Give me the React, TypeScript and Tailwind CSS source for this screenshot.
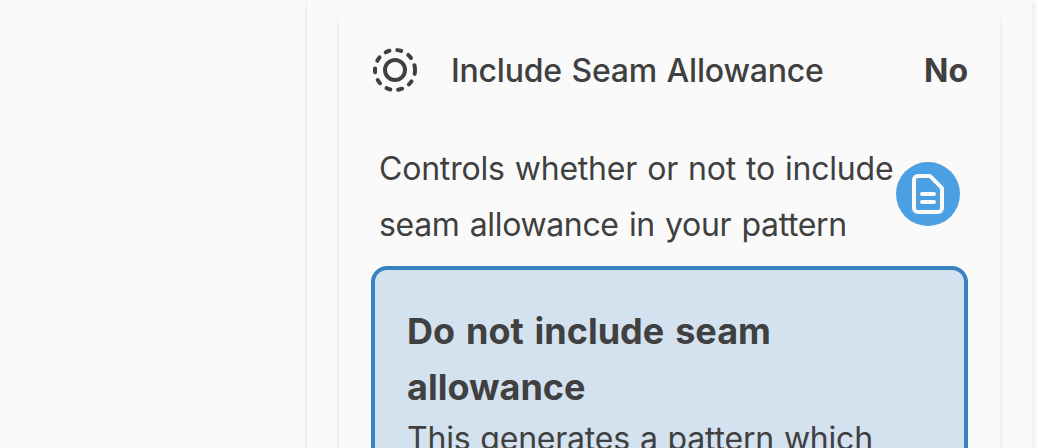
function SeamAllowanceIcon() {
  return (
    <svg viewBox="0 0 24 24" className="size-12 shrink-0" fill="none" stroke="currentColor" strokeWidth="2" strokeLinecap="round">
      <circle cx="12" cy="12" r="5" />
      <circle cx="12" cy="12" r="10" strokeDasharray="2 4" />
    </svg>
  );
}

function DocsIcon() {
  return (
    <svg viewBox="0 0 24 24" className="size-12" fill="none" stroke="currentColor" strokeWidth="2" strokeLinecap="round" strokeLinejoin="round">
      <path d="M9 12h6m-6 4h6m2 5H7a2 2 0 01-2-2V5a2 2 0 012-2h5.586a1 1 0 01.707.293l5.414 5.414a1 1 0 01.293.707V19a2 2 0 01-2 2z" />
    </svg>
  );
}

export default function App() {
  return (
    <div className="flex h-[448px] w-full overflow-hidden bg-[#fafafa] pl-[307px] font-['Inter',sans-serif] text-[32px] text-[#404040]">
      <div className="h-[520px] w-[725px] shrink-0 bg-[#fafafa] px-8 pt-[14px] shadow-[0_2px_6px_rgba(0,0,0,0.08),0_2px_4px_rgba(0,0,0,0.04)]">
        <section className="h-[560px] rounded-lg bg-[#fafafa] px-8 pt-7 shadow-[0_2px_6px_rgba(0,0,0,0.08),0_2px_4px_rgba(0,0,0,0.04)]">
          <header className="flex h-14 items-center">
            <SeamAllowanceIcon />
            <h2 className="ml-8 pt-0.5 font-medium leading-[56px] tracking-[-0.2px] whitespace-nowrap [word-spacing:1.2px]">Include Seam Allowance</h2>
            <span className="ml-auto pt-0.5 font-bold leading-[56px]">No</span>
          </header>
          <div className="mt-[43px] flex h-[112px] pl-2">
            <p className="w-[517px] shrink-0 leading-[56px] whitespace-nowrap">
              <span className="tracking-[-0.2px] [word-spacing:1.2px]">Controls whether or not to include</span>
              <br />
              <span className="tracking-[-0.35px] [word-spacing:1.6px]">seam allowance in your pattern</span>
            </p>
            <button className="mt-[21px] flex size-16 shrink-0 items-center justify-center rounded-full bg-[#4b9fe3] text-[#fafafa]" aria-label="Documentation">
              <DocsIcon />
            </button>
          </div>
          <div className="mt-[13px] h-[260px] rounded-2xl border-4 border-[#3882c1] bg-[#d4e1ee] px-8 pt-[33px]">
            <h3 className="text-[36px] font-bold leading-[56px] whitespace-nowrap [word-spacing:2.4px]">
              Do not include seam
              <br />
              allowance
            </h3>
            <p className="leading-[48px] tracking-[-0.22px] whitespace-nowrap [word-spacing:1.2px]">This generates a pattern which</p>
          </div>
        </section>
      </div>
    </div>
  );
}
